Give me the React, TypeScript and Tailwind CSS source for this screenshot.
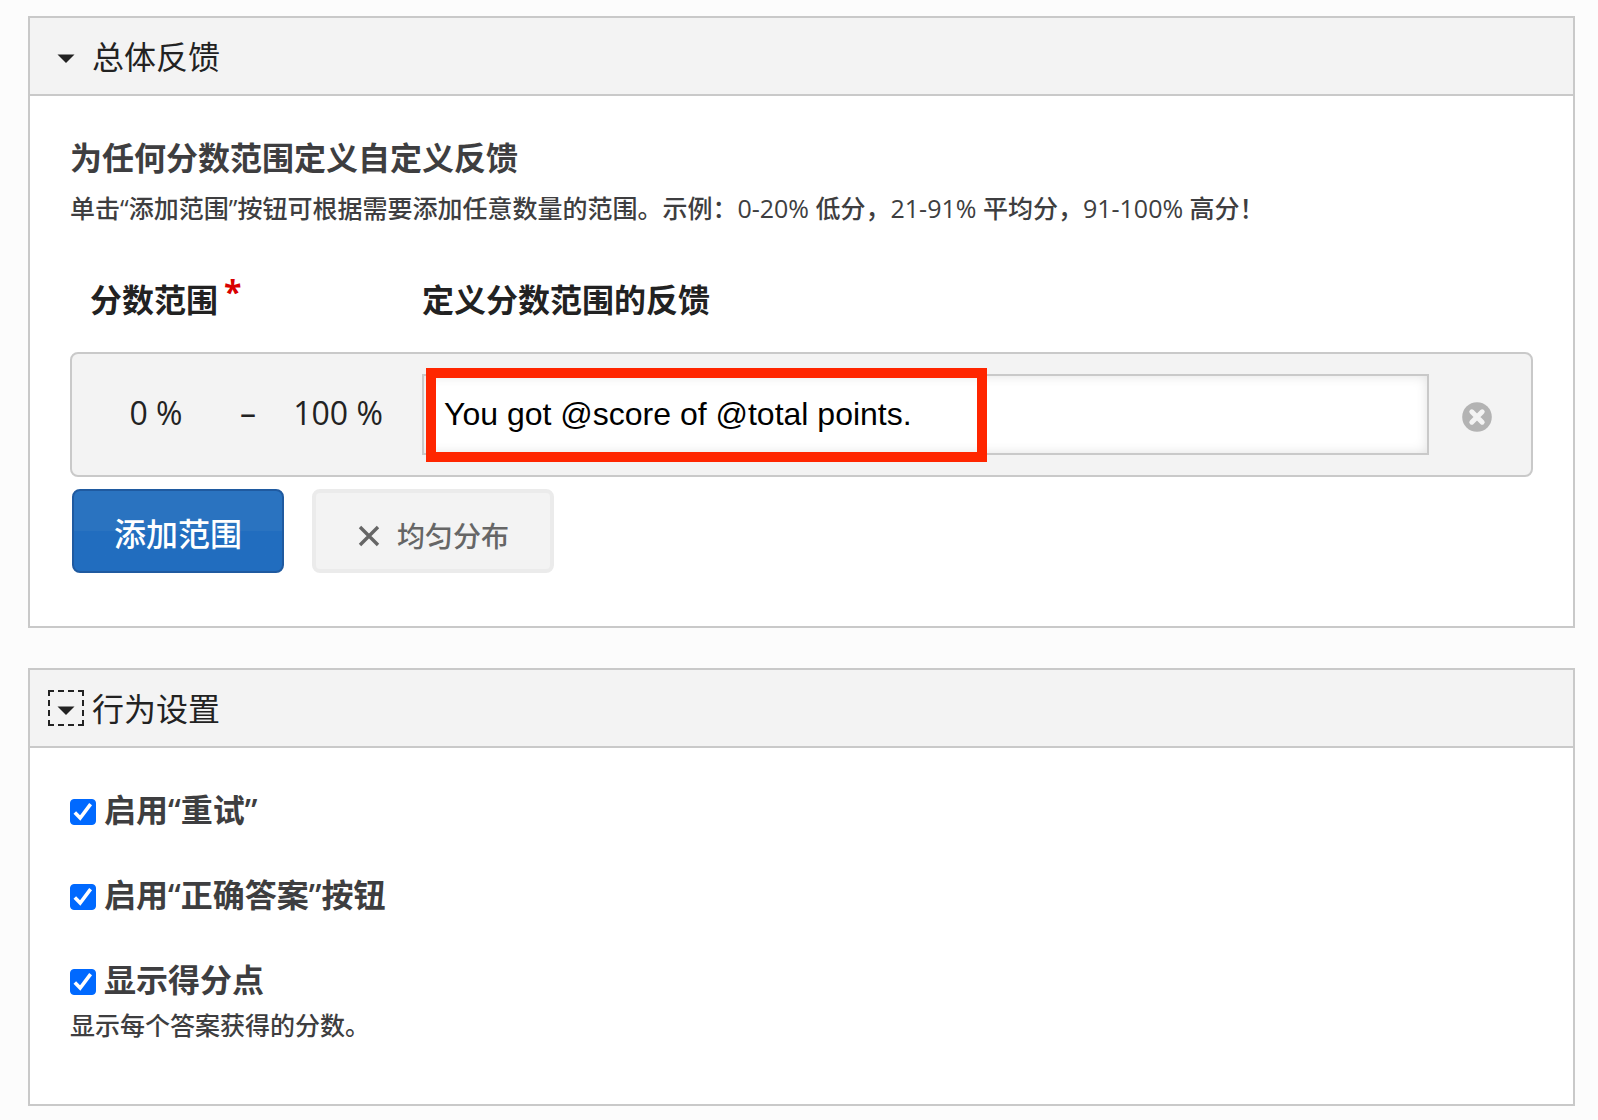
import { useState } from "react";
import type { ReactNode } from "react";

const behaviours = [
  { id: "retry", label: "启用“重试”" },
  { id: "solutions", label: "启用“正确答案”按钮" },
  {
    id: "points",
    label: "显示得分点",
    description: "显示每个答案获得的分数。",
  },
];

function Panel({
  title,
  focused,
  children,
}: {
  title: string;
  focused?: boolean;
  children: ReactNode;
}) {
  const [open, setOpen] = useState(true);
  return (
    <section className="border-2 border-[#c9c9c9] bg-white">
      <div
        className={`flex h-[78px] items-center gap-2 bg-[#f3f3f3] pl-[18px] ${
          open ? "border-b-2 border-[#c9c9c9]" : ""
        }`}
      >
        <button
          type="button"
          aria-label={title}
          aria-expanded={open}
          onClick={() => setOpen(!open)}
          className={`size-9 border-2 border-dashed ${
            focused ? "border-[#222222]" : "border-transparent"
          }`}
        >
          <svg viewBox="0 0 32 32" className="size-8" fill="#222222">
            <path d="M7.5 14.5h17L16 23z" />
          </svg>
        </button>
        <h2 className="pt-0.5 text-[32px] leading-10 text-[#222222]">
          {title}
        </h2>
      </div>
      {open && children}
    </section>
  );
}

function Checkbox({ id, label }: { id: string; label: string }) {
  const [checked, setChecked] = useState(true);
  return (
    <div className="flex h-10 items-start gap-2">
      <span className="relative mt-[7px] size-[26px]">
        <input
          id={id}
          type="checkbox"
          checked={checked}
          onChange={() => setChecked(!checked)}
          className="block size-[26px] appearance-none rounded-[4px] border border-[#767676] bg-white checked:border-[#0069ff] checked:bg-[#0069ff]"
        />
        {checked && (
          <svg
            viewBox="0 0 26 26"
            className="pointer-events-none absolute inset-0"
            fill="none"
            stroke="#ffffff"
            strokeWidth="3.6"
          >
            <path d="M4.8 13.4l5.4 5.6L20.6 5.2" />
          </svg>
        )}
      </span>
      <label
        htmlFor={id}
        className="text-[32px] leading-9 font-semibold text-[#3e3e40]"
      >
        {label}
      </label>
    </div>
  );
}

function FeedbackRange() {
  const [feedback, setFeedback] = useState("You got @score of @total points.");
  return (
    <div className="flex rounded-lg border-2 border-[#c9c9c9] bg-[#f3f3f3] py-5 text-[32px] text-[#222222]">
      <div className="flex h-[78px] w-[350px] items-center leading-10">
        <span className="w-[168px] text-center">0 %</span>
        <span className="w-4 text-center">–</span>
        <span className="w-[164px] text-center">100 %</span>
      </div>
      <div className="relative flex-1">
        <input
          type="text"
          aria-label="定义分数范围的反馈"
          value={feedback}
          onChange={(e) => setFeedback(e.target.value)}
          className="block h-[81px] w-full border-2 border-[#c9c9c9] bg-white px-5 font-['Liberation_Sans',sans-serif] text-black shadow-[inset_0_0_12px_rgba(0,0,0,0.12)] outline-none"
        />
        <div className="pointer-events-none absolute -top-1.5 left-1 h-[94px] w-[561px] border-10 border-[#ff2600]" />
      </div>
      <button type="button" aria-label="删除" className="mr-[38px] ml-8">
        <svg viewBox="0 0 32 36" className="h-9 w-8">
          <circle cx="16" cy="20" r="14.8" fill="#b3b3b3" />
          <path
            d="M10.8 14.8l10.4 10.4M21.2 14.8L10.8 25.2"
            stroke="#f3f3f3"
            strokeWidth="5"
            strokeLinecap="round"
          />
        </svg>
      </button>
    </div>
  );
}

function App() {
  return (
    <main className="flex min-h-screen flex-col gap-10 bg-[#fcfcfc] pt-4 pr-[23px] pb-3.5 pl-7 font-['Open_Sans','Noto_Sans_CJK_SC',sans-serif]">
      <Panel title="总体反馈">
        <div className="px-10 pt-[42px] pb-[53px]">
          <h3 className="text-[32px] leading-10 font-bold text-[#3e3e40]">
            为任何分数范围定义自定义反馈
          </h3>
          <p className="mt-3 text-[25px] leading-9 font-medium text-[#3e3e40]">
            单击“添加范围”按钮可根据需要添加任意数量的范围。示例：0-20% 低分，21-91%
            平均分，91-100% 高分！
          </p>
          <div className="mt-[54px] flex pl-5 text-[32px] leading-10 font-bold text-[#222222]">
            <div className="flex w-[332px]">
              分数范围
              <span className="ml-1.5 leading-6 text-[#d90000]">*</span>
            </div>
            <div>定义分数范围的反馈</div>
          </div>
          <div className="mt-8">
            <FeedbackRange />
          </div>
          <div className="mt-3 flex gap-7 px-0.5">
            <button
              type="button"
              className="h-[84px] rounded-lg border-2 border-[#1f5aa0] bg-linear-to-b from-[#2a73c0] from-50% to-[#216dbf] to-50% px-10 pt-1.5 text-[32px] font-medium text-white"
            >
              添加范围
            </button>
            <button
              type="button"
              className="flex h-[84px] items-center gap-4 rounded-lg border-4 border-[#ebebeb] bg-[#f3f3f3] px-[41px] pt-2.5 text-[28px] font-medium text-[#666666]"
            >
              <svg
                viewBox="0 0 24 24"
                className="size-6"
                stroke="currentColor"
                strokeWidth="3.4"
              >
                <path d="M3 3l18 18M21 3L3 21" />
              </svg>
              均匀分布
            </button>
          </div>
        </div>
      </Panel>

      <Panel title="行为设置" focused>
        <div className="flex flex-col gap-[45px] px-10 pt-11 pb-[61px]">
          {behaviours.map((item) => (
            <div key={item.id}>
              <Checkbox id={item.id} label={item.label} />
              {item.description && (
                <p className="mt-[5px] text-[25px] leading-9 font-medium text-[#3e3e40]">
                  {item.description}
                </p>
              )}
            </div>
          ))}
        </div>
      </Panel>
    </main>
  );
}

export default App;
